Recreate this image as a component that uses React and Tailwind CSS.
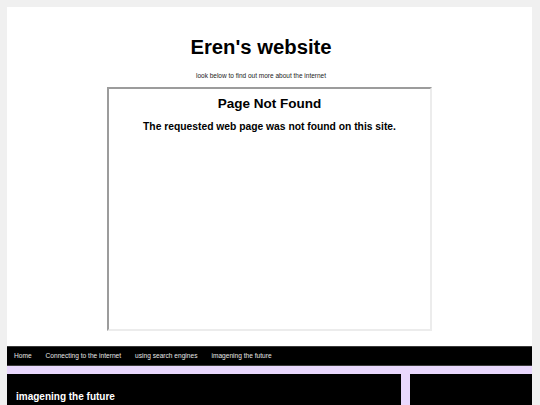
const NAV_LINKS = ['Home', 'Connecting to the internet', 'using search engines', 'imagening the future']

const App = () => {
  return (
    <div className="min-h-screen bg-[#f0f0f0] pt-[7px] font-['Liberation_Sans',Arial,sans-serif]">
      <div className="ml-[7px] w-[525px] bg-white">
        {/* Header */}
        <header className="pr-[17px] pt-[28px] text-center">
          <h1 className="text-[20.3px] font-bold leading-[24px] text-black">Eren's website</h1>
          <p className="mt-[13px] text-[6.5px] leading-[8px] text-[#222]">look below to find out more about the internet</p>
        </header>

        {/* Embedded frame */}
        <div className="mx-auto mt-[7px] h-[244px] w-[325px] border-2 border-b-[#ececec] border-l-[#9c9c9c] border-r-[#ececec] border-t-[#9c9c9c] bg-white text-center">
          <h2 className="pt-[7px] text-[13.5px] font-bold leading-[16px] text-black">Page Not Found</h2>
          <p className="mt-[9px] text-[10.3px] font-bold leading-[12px] text-black">
            The requested web page was not found on this site.
          </p>
        </div>

        {/* Nav */}
        <nav className="mt-[15px] flex h-[20px] items-center border-y border-[#3a3a3a] bg-black">
          {NAV_LINKS.map((link) => (
            <a key={link} href="#" className="px-[7px] text-[6.6px] leading-[8px] text-[#e6e6e6]">
              {link}
            </a>
          ))}
        </nav>

        {/* Content */}
        <div className="flex gap-[9px] bg-[#e9d8fd] pt-[8px]">
          <section className="h-[40px] w-[394px] bg-black px-[9px] pt-[16px]">
            <h3 className="text-[10px] font-bold leading-[14px] text-white">imagening the future</h3>
          </section>
          <aside className="h-[40px] flex-1 bg-black" />
        </div>
      </div>
    </div>
  )
}

export default App
